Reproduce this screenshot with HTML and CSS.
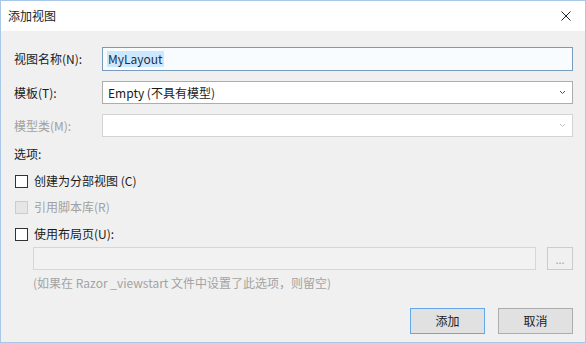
FILE: index.html
```html
<!DOCTYPE html>
<html lang="zh-CN">
<head>
<meta charset="utf-8">
<title>添加视图</title>
<link rel="stylesheet" href="styles.css">
</head>
<body>
<div class="window">
  <div class="titlebar">
    <span class="title">添加视图</span>
    <span class="close">
      <svg width="10" height="10" viewBox="0 0 10 10"><path d="M0.5 0.5 L9.5 9.5 M9.5 0.5 L0.5 9.5" stroke="#222" stroke-width="1" fill="none"/></svg>
    </span>
  </div>
  <div class="content">
    <div class="row row1">
      <label class="label">视图名称(N):</label>
      <div class="field text-field"><span class="sel">MyLayout</span></div>
    </div>
    <div class="row row2">
      <label class="label">模板(T):</label>
      <div class="field select"><span class="value">Empty (不具有模型)</span>
        <svg class="chev" width="7" height="5" viewBox="0 0 7 5"><path d="M1 1 L3.5 3.5 L6 1" stroke="#555" stroke-width="1" fill="none"/></svg>
      </div>
    </div>
    <div class="row row3">
      <label class="label disabled">模型类(M):</label>
      <div class="field select select-disabled"><span class="value"></span>
        <svg class="chev" width="7" height="5" viewBox="0 0 7 5"><path d="M1 1 L3.5 3.5 L6 1" stroke="#c4c4c4" stroke-width="1" fill="none"/></svg>
      </div>
    </div>
    <div class="section">选项:</div>
    <div class="check check1"><span class="box"></span><span>创建为分部视图 (C)</span></div>
    <div class="check check2 disabled"><span class="box box-disabled"></span><span>引用脚本库(R)</span></div>
    <div class="check check3"><span class="box"></span><span>使用布局页(U):</span></div>
    <div class="layout-row">
      <div class="layout-input"></div>
      <div class="browse">...</div>
    </div>
    <div class="hint">(如果在 Razor _viewstart 文件中设置了此选项，则留空)</div>
    <div class="buttons">
      <div class="btn btn-default">添加</div>
      <div class="btn">取消</div>
    </div>
  </div>
</div>
</body>
</html>
```

FILE: styles.css
```css
* { box-sizing: border-box; }
html, body { margin: 0; padding: 0; }
body {
  width: 586px;
  height: 343px;
  font-family: "Noto Sans CJK SC", "Noto Sans", sans-serif;
  font-size: 12px;
  color: #1a1a1a;
  background: #f0f0f0;
}
.window {
  width: 586px;
  height: 343px;
  border: 1px solid #a9c7e6;
  display: flex;
  flex-direction: column;
  background: #f0f0f0;
}
.titlebar {
  height: 30px;
  background: #ffffff;
  display: flex;
  align-items: center;
  justify-content: space-between;
  padding: 0 0 0 7px;
  flex: none;
}
.title { line-height: 16px; color: #222; }
.close {
  width: 30px;
  height: 30px;
  display: flex;
  align-items: center;
  justify-content: center;
  margin-right: 4px;
}
.close svg { display: block; }
.content {
  flex: 1;
  padding: 0 12px 0 12px;
  display: flex;
  flex-direction: column;
}
.row {
  display: flex;
  align-items: center;
  height: 24px;
}
.row1 { margin-top: 16px; }
.row2 { margin-top: 10px; height: 23px; }
.row3 { margin-top: 10px; height: 23px; }
.label {
  width: 89px;
  flex: none;
  line-height: 16px;
  padding-left: 1px;
}
.disabled { color: #a0a0a0; }
.field {
  flex: none;
  width: 471px;
  height: 100%;
  display: flex;
  align-items: center;
  position: relative;
}
.text-field {
  border: 1px solid #7a9bc0;
  background: #f8fcff;
  padding-left: 4px;
}
.sel {
  background: #cce8ff;
  color: #1c2f4a;
  line-height: 16px;
  padding: 0 1px;
}
.select {
  border: 1px solid #adadad;
  background: #ffffff;
  padding-left: 5px;
  justify-content: space-between;
  padding-right: 6px;
}
.select .value { line-height: 16px; }
.select-disabled { border-color: #d3d3d3; }
.chev { display: block; }
.section {
  margin-top: 9px;
  line-height: 16px;
  padding-left: 1px;
}
.check {
  display: flex;
  align-items: center;
  gap: 6px;
  height: 16px;
  line-height: 16px;
  padding-left: 2px;
}
.check1 { margin-top: 11px; }
.check2 { margin-top: 10px; }
.check3 { margin-top: 11px; }
.box {
  width: 13px;
  height: 13px;
  border: 1px solid #333333;
  background: #ffffff;
  flex: none;
}
.box-disabled {
  border-color: #cccccc;
  background: #e6e6e6;
}
.layout-row {
  display: flex;
  gap: 11px;
  margin-top: 5px;
  padding-left: 20px;
  height: 23px;
}
.layout-input {
  width: 503px;
  border: 1px solid #d7d7d7;
  background: #f2f2f2;
}
.browse {
  width: 26px;
  border: 1px solid #cccccc;
  background: #f0f0f0;
  color: #a0a0a0;
  display: flex;
  align-items: center;
  justify-content: center;
  line-height: 10px;
  font-size: 11px;
}
.hint {
  margin-top: 5px;
  padding-left: 20px;
  color: #a3a3a3;
  line-height: 16px;
}
.buttons {
  display: flex;
  justify-content: flex-end;
  gap: 13px;
  margin-top: 17px;
}
.btn {
  width: 75px;
  height: 26px;
  border: 1px solid #adadad;
  background: #e1e1e1;
  display: flex;
  align-items: center;
  justify-content: center;
  line-height: 16px;
}
.btn-default { border-color: #62a8ea; }
```
